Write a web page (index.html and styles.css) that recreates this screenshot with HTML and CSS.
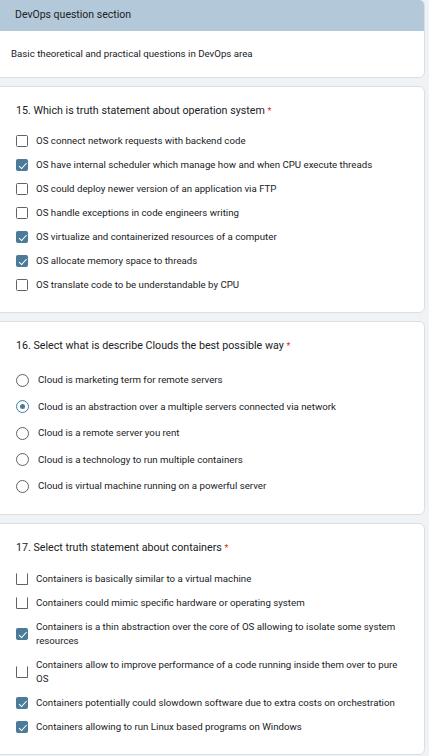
FILE: index.html
```html
<!DOCTYPE html>
<html>
<head>
<meta charset="utf-8">
<link rel="stylesheet" href="styles.css">
</head>
<body>
<div class="page">
  <section class="card intro">
    <div class="intro-head">DevOps question section</div>
    <div class="intro-body">Basic theoretical and practical questions in DevOps area</div>
  </section>

  <section class="card q q15">
    <div class="q-title">15. Which is truth statement about operation system <span class="req">*</span></div>
    <ul class="opts">
      <li class="opt"><span class="cb"></span><span class="lbl">OS connect network requests with backend code</span></li>
      <li class="opt"><span class="cb on"></span><span class="lbl">OS have internal scheduler which manage how and when CPU execute threads</span></li>
      <li class="opt"><span class="cb"></span><span class="lbl">OS could deploy newer version of an application via FTP</span></li>
      <li class="opt"><span class="cb"></span><span class="lbl">OS handle exceptions in code engineers writing</span></li>
      <li class="opt"><span class="cb on"></span><span class="lbl">OS virtualize and containerized resources of a computer</span></li>
      <li class="opt"><span class="cb on"></span><span class="lbl">OS allocate memory space to threads</span></li>
      <li class="opt"><span class="cb"></span><span class="lbl">OS translate code to be understandable by CPU</span></li>
    </ul>
  </section>

  <section class="card q q16">
    <div class="q-title">16. Select what is describe Clouds the best possible way <span class="req">*</span></div>
    <ul class="opts radios">
      <li class="opt"><span class="rd"></span><span class="lbl">Cloud is marketing term for remote servers</span></li>
      <li class="opt"><span class="rd on"></span><span class="lbl">Cloud is an abstraction over a multiple servers connected via network</span></li>
      <li class="opt"><span class="rd"></span><span class="lbl">Cloud is a remote server you rent</span></li>
      <li class="opt"><span class="rd"></span><span class="lbl">Cloud is a technology to run multiple containers</span></li>
      <li class="opt"><span class="rd"></span><span class="lbl">Cloud is virtual machine running on a powerful server</span></li>
    </ul>
  </section>

  <section class="card q q17">
    <div class="q-title">17. Select truth statement about containers <span class="req">*</span></div>
    <ul class="opts">
      <li class="opt"><span class="cb open"></span><span class="lbl">Containers is basically similar to a virtual machine</span></li>
      <li class="opt"><span class="cb open"></span><span class="lbl">Containers could mimic specific hardware or operating system</span></li>
      <li class="opt"><span class="cb on"></span><span class="lbl">Containers is a thin abstraction over the core of OS allowing to isolate some system resources</span></li>
      <li class="opt"><span class="cb open"></span><span class="lbl">Containers allow to improve performance of a code running inside them over to pure OS</span></li>
      <li class="opt"><span class="cb on"></span><span class="lbl">Containers potentially could slowdown software due to extra costs on orchestration</span></li>
      <li class="opt"><span class="cb on"></span><span class="lbl">Containers allowing to run Linux based programs on Windows</span></li>
    </ul>
  </section>
</div>
</body>
</html>
```

FILE: styles.css
```css
html, body {
  margin: 0;
  padding: 0;
  background: #eff3f6;
}
body {
  font-family: Roboto, "Liberation Sans", Arial, sans-serif;
  color: #202124;
}
.page {
  display: flex;
  flex-direction: column;
  gap: 8px;
  margin: 0 4px 0 -8px;
}
.card {
  background: #fff;
  border: 1px solid #dadfe4;
  border-radius: 6px;
}
.intro {
  overflow: hidden;
  margin-top: -1px;
}
.intro-head {
  background: #b3c9d9;
  height: 31px;
  box-sizing: border-box;
  padding: 8px 0 0 22px;
  font-size: 10.5px;
  line-height: 14px;
}
.intro-body {
  padding: 16px 0 0 18px;
  height: 30px;
  font-size: 9.7px;
  line-height: 14px;
}
.q {
  padding: 16px 18px 20px 23px;
}
.q-title {
  font-size: 10.7px;
  line-height: 16px;
}
.req {
  color: #d93025;
  font-size: 9px;
}
.opts {
  list-style: none;
  margin: 15px 0 0;
  padding: 0;
  display: flex;
  flex-direction: column;
  gap: 10px;
}
.opt {
  display: flex;
  align-items: center;
  gap: 8px;
  min-height: 14px;
  font-size: 9.7px;
  line-height: 14px;
}
.cb {
  flex: none;
  width: 10px;
  height: 10px;
  border: 1px solid #5f6368;
  border-radius: 1.5px;
  position: relative;
}
.cb.open {
  border-top-color: transparent;
  border-radius: 0 0 1.5px 1.5px;
}
.cb.on {
  background: #4a7b98;
  border-color: #4a7b98;
}
.cb.on::after {
  content: "";
  position: absolute;
  left: 3.5px;
  top: 0.5px;
  width: 3px;
  height: 6.5px;
  border: solid #fff;
  border-width: 0 1.6px 1.6px 0;
  transform: rotate(42deg);
}
.radios {
  margin-top: 19px;
  gap: 12.5px;
}
.radios .opt {
  gap: 9px;
}
.q16 {
  padding-bottom: 21px;
}
.rd {
  flex: none;
  width: 11px;
  height: 11px;
  border: 1px solid #5f6368;
  border-radius: 50%;
  position: relative;
}
.rd.on {
  border-color: #4a7b98;
}
.rd.on::after {
  content: "";
  position: absolute;
  left: 3px;
  top: 3px;
  width: 5px;
  height: 5px;
  border-radius: 50%;
  background: #4a7b98;
}
.q17 .opts {
  margin-top: 16px;
}
```
